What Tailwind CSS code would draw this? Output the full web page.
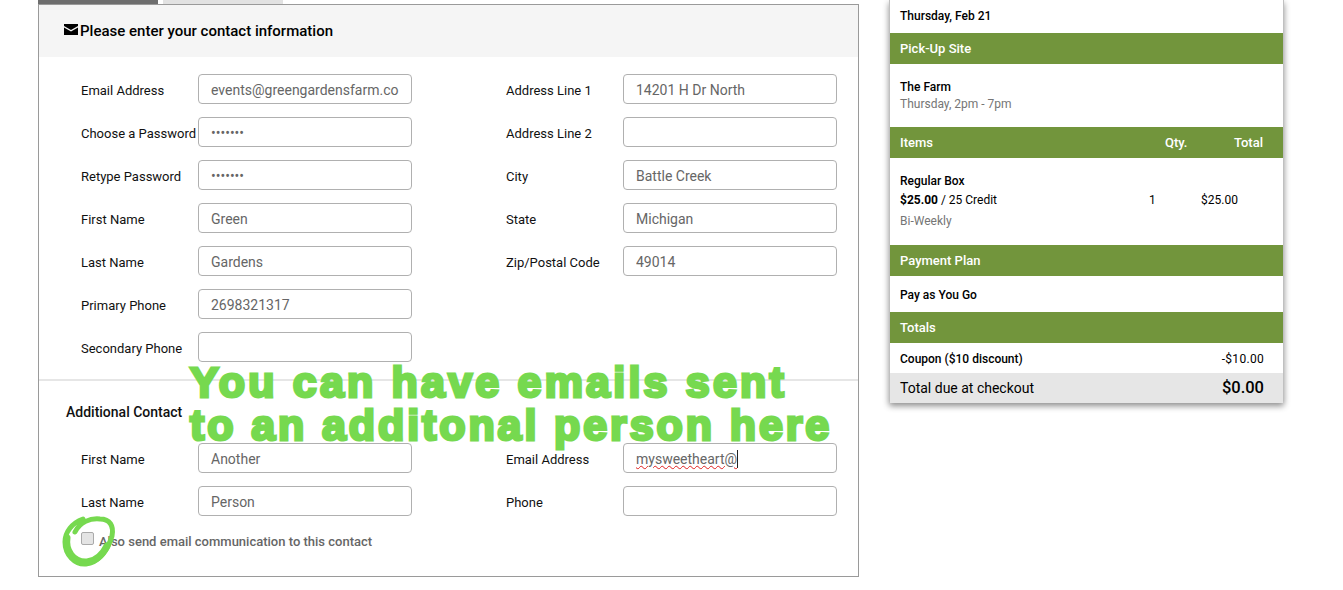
<!DOCTYPE html>
<html>
<head>
<meta charset="utf-8">
<script src="https://cdn.jsdelivr.net/npm/@tailwindcss/browser@4"></script>
</head>
<body class="bg-white font-['Roboto',sans-serif] text-black overflow-hidden">
<div class="relative w-[1343px] h-[590px] overflow-hidden flex items-start">
  <!-- left column -->
  <div class="ml-[38px] w-[821px] shrink-0">
    <div class="flex gap-[5px] h-[4px]">
      <div class="w-[120px] bg-[#6e6e6e]"></div>
      <div class="w-[120px] bg-[#e2e2e2]"></div>
    </div>
    <div class="border border-[#9a9a9a] h-[573px]">
      <div class="h-[52px] bg-[#f5f5f5] flex items-center pl-[25px] pt-[1px] text-[15px] font-medium">
        <svg class="w-[14px] h-[11px] mr-[2px] mb-[4px]" viewBox="0 0 14 11"><path fill="#000" d="M0 0h14v2L7 6 0 2zM0 3.6l7 4 7-4V11H0z"/></svg>
        <span>Please enter your contact information</span>
      </div>
      <div class="flex pt-[17px] h-[322px]">
        <div class="w-[425px] pl-[42px] flex flex-col gap-[13px]">
          <div class="flex items-center h-[30px]"><label class="w-[117px] pt-[3px] text-[13px] whitespace-nowrap text-[#111]">Email Address</label><input class="w-[214px] h-[30px] border border-[#b0b0b0] rounded-[4px] px-[12px] pt-[2px] text-[14px] text-[#666]" value="events@greengardensfarm.co"></div>
          <div class="flex items-center h-[30px]"><label class="w-[117px] pt-[3px] text-[13px] whitespace-nowrap text-[#111]">Choose a Password</label><input type="password" class="w-[214px] h-[30px] border border-[#b0b0b0] rounded-[4px] px-[12px] pt-[2px] text-[14px] text-[#666]" value="1234567"></div>
          <div class="flex items-center h-[30px]"><label class="w-[117px] pt-[3px] text-[13px] whitespace-nowrap text-[#111]">Retype Password</label><input type="password" class="w-[214px] h-[30px] border border-[#b0b0b0] rounded-[4px] px-[12px] pt-[2px] text-[14px] text-[#666]" value="1234567"></div>
          <div class="flex items-center h-[30px]"><label class="w-[117px] pt-[3px] text-[13px] whitespace-nowrap text-[#111]">First Name</label><input class="w-[214px] h-[30px] border border-[#b0b0b0] rounded-[4px] px-[12px] pt-[2px] text-[14px] text-[#666]" value="Green"></div>
          <div class="flex items-center h-[30px]"><label class="w-[117px] pt-[3px] text-[13px] whitespace-nowrap text-[#111]">Last Name</label><input class="w-[214px] h-[30px] border border-[#b0b0b0] rounded-[4px] px-[12px] pt-[2px] text-[14px] text-[#666]" value="Gardens"></div>
          <div class="flex items-center h-[30px]"><label class="w-[117px] pt-[3px] text-[13px] whitespace-nowrap text-[#111]">Primary Phone</label><input class="w-[214px] h-[30px] border border-[#b0b0b0] rounded-[4px] px-[12px] pt-[2px] text-[14px] text-[#666]" value="2698321317"></div>
          <div class="flex items-center h-[30px]"><label class="w-[117px] pt-[3px] text-[13px] whitespace-nowrap text-[#111]">Secondary Phone</label><input class="w-[214px] h-[30px] border border-[#b0b0b0] rounded-[4px] px-[12px] text-[14px] text-[#666]" value=""></div>
        </div>
        <div class="flex-1 pl-[42px] flex flex-col gap-[13px]">
          <div class="flex items-center h-[30px]"><label class="w-[117px] pt-[3px] text-[13px] whitespace-nowrap text-[#111]">Address Line 1</label><input class="w-[214px] h-[30px] border border-[#b0b0b0] rounded-[4px] px-[12px] pt-[2px] text-[14px] text-[#666]" value="14201 H Dr North"></div>
          <div class="flex items-center h-[30px]"><label class="w-[117px] pt-[3px] text-[13px] whitespace-nowrap text-[#111]">Address Line 2</label><input class="w-[214px] h-[30px] border border-[#b0b0b0] rounded-[4px] px-[12px] text-[14px] text-[#666]" value=""></div>
          <div class="flex items-center h-[30px]"><label class="w-[117px] pt-[3px] text-[13px] whitespace-nowrap text-[#111]">City</label><input class="w-[214px] h-[30px] border border-[#b0b0b0] rounded-[4px] px-[12px] pt-[2px] text-[14px] text-[#666]" value="Battle Creek"></div>
          <div class="flex items-center h-[30px]"><label class="w-[117px] pt-[3px] text-[13px] whitespace-nowrap text-[#111]">State</label><input class="w-[214px] h-[30px] border border-[#b0b0b0] rounded-[4px] px-[12px] pt-[2px] text-[14px] text-[#666]" value="Michigan"></div>
          <div class="flex items-center h-[30px]"><label class="w-[117px] pt-[3px] text-[13px] whitespace-nowrap text-[#111]">Zip/Postal Code</label><input class="w-[214px] h-[30px] border border-[#b0b0b0] rounded-[4px] px-[12px] pt-[2px] text-[14px] text-[#666]" value="49014"></div>
        </div>
      </div>
      <div class="border-t-2 border-[#e6e6e6] pt-[23px] pl-[27px] h-[196px]">
        <div class="text-[14px] font-medium text-[#111] leading-[17px] h-[39px]">Additional Contact</div>
        <div class="flex">
          <div class="w-[398px] pl-[15px] flex flex-col gap-[13px]">
            <div class="flex items-center h-[30px]"><label class="w-[117px] pt-[3px] text-[13px] whitespace-nowrap text-[#111]">First Name</label><input class="w-[214px] h-[30px] border border-[#b0b0b0] rounded-[4px] px-[12px] pt-[2px] text-[14px] text-[#666]" value="Another"></div>
            <div class="flex items-center h-[30px]"><label class="w-[117px] pt-[3px] text-[13px] whitespace-nowrap text-[#111]">Last Name</label><input class="w-[214px] h-[30px] border border-[#b0b0b0] rounded-[4px] px-[12px] pt-[2px] text-[14px] text-[#666]" value="Person"></div>
          </div>
          <div class="flex-1 pl-[42px] flex flex-col gap-[13px]">
            <div class="flex items-center h-[30px]"><label class="w-[117px] pt-[3px] text-[13px] whitespace-nowrap text-[#111]">Email Address</label>
              <div class="w-[214px] h-[30px] border border-[#b0b0b0] rounded-[4px] pl-[12px] pt-[2px] text-[14px] text-[#666] flex items-center">
                <span class="underline decoration-wavy decoration-[#e02020] decoration-[1px] underline-offset-[1px]">mysweetheart@</span><span class="inline-block w-[1px] h-[18px] bg-[#222]"></span>
              </div>
            </div>
            <div class="flex items-center h-[30px]"><label class="w-[117px] pt-[3px] text-[13px] whitespace-nowrap text-[#111]">Phone</label><input class="w-[214px] h-[30px] border border-[#b0b0b0] rounded-[4px] px-[12px] text-[14px] text-[#666]" value=""></div>
          </div>
        </div>
        <div class="flex items-center mt-[16px] pl-[15px] h-[20px]">
          <span class="w-[13px] h-[13px] mb-[7px] border border-[#aaa] rounded-[2px] bg-[#e4e4e4] shrink-0"></span>
          <span class="ml-[5px] text-[13px] font-medium text-[#666]">Also send email communication to this contact</span>
        </div>
      </div>
    </div>
  </div>
  <!-- right panel -->
  <div class="ml-[30px] w-[395px] shrink-0 bg-white border-x border-[#c0c0c0] shadow-[0_3px_6px_rgba(0,0,0,0.45)] rounded-b-[2px] text-[12px]">
    <div class="h-[33px] px-[10px] flex items-center font-medium pb-[1px]">Thursday, Feb 21</div>
    <div class="h-[31px] bg-[#72953c] text-white text-[13px] font-medium px-[10px] flex items-center">Pick-Up Site</div>
    <div class="h-[63px] px-[10px] pt-[15px]">
      <div class="font-medium leading-[17px]">The Farm</div>
      <div class="text-[#757575] leading-[17px]">Thursday, 2pm - 7pm</div>
    </div>
    <div class="h-[31px] bg-[#72953c] text-white text-[13px] font-medium pl-[10px] flex items-center">
      <span class="w-[265px]">Items</span><span class="w-[60px]">Qty.</span><span class="w-[38px] text-right">Total</span>
    </div>
    <div class="h-[87px] px-[10px] pt-[15px]">
      <div class="font-medium leading-[17px]">Regular Box</div>
      <div class="flex leading-[20px] items-center">
        <span class="w-[249px]"><b class="font-bold">$25.00</b> / 25 Credit</span><span class="w-[52px]">1</span><span class="font-normal">$25.00</span>
      </div>
      <div class="text-[#757575] leading-[22px]">Bi-Weekly</div>
    </div>
    <div class="h-[31px] bg-[#72953c] text-white text-[13px] font-medium px-[10px] flex items-center">Payment Plan</div>
    <div class="h-[36px] px-[10px] pt-[2px] flex items-center font-medium">Pay as You Go</div>
    <div class="h-[31px] bg-[#72953c] text-white text-[13px] font-medium px-[10px] flex items-center">Totals</div>
    <div class="h-[30px] pl-[10px] pr-[19px] pt-[2px] flex items-center justify-between font-medium"><span>Coupon ($10 discount)</span><span class="font-normal tracking-[0.3px]">-$10.00</span></div>
    <div class="h-[30px] pl-[10px] pr-[19px] flex items-center justify-between bg-[#e6e6e6]"><span class="text-[14px]">Total due at checkout</span><span class="text-[16.5px] font-medium">$0.00</span></div>
  </div>
  <!-- annotation overlay -->
  <div class="absolute left-[190px] top-[361px] font-['Liberation_Sans',sans-serif] font-bold text-[#76d94f] text-[43px] leading-[43px] whitespace-nowrap [-webkit-text-stroke:3px_#76d94f]">
    <div class="tracking-[3.2px]">You can have emails sent</div>
    <div class="tracking-[2.9px]">to an additonal person here</div>
  </div>
  <svg class="absolute left-[60px] top-[512px] w-[60px] h-[58px] pointer-events-none" viewBox="0 0 60 58" fill="none"><path d="M23 7C12 11 5 20 5 30 5 43 15 53 26 52 38 51 48 38 52 24 54 14 50 7 40 7 30 6 20 10 15 20" stroke="#76d94f" stroke-width="5" stroke-linecap="round"/><path d="M7 26C5 38 13 51 27 50 36 49 43 42 47 34" stroke="#76d94f" stroke-width="7" stroke-linecap="round"/></svg>
</div>
</body>
</html>
